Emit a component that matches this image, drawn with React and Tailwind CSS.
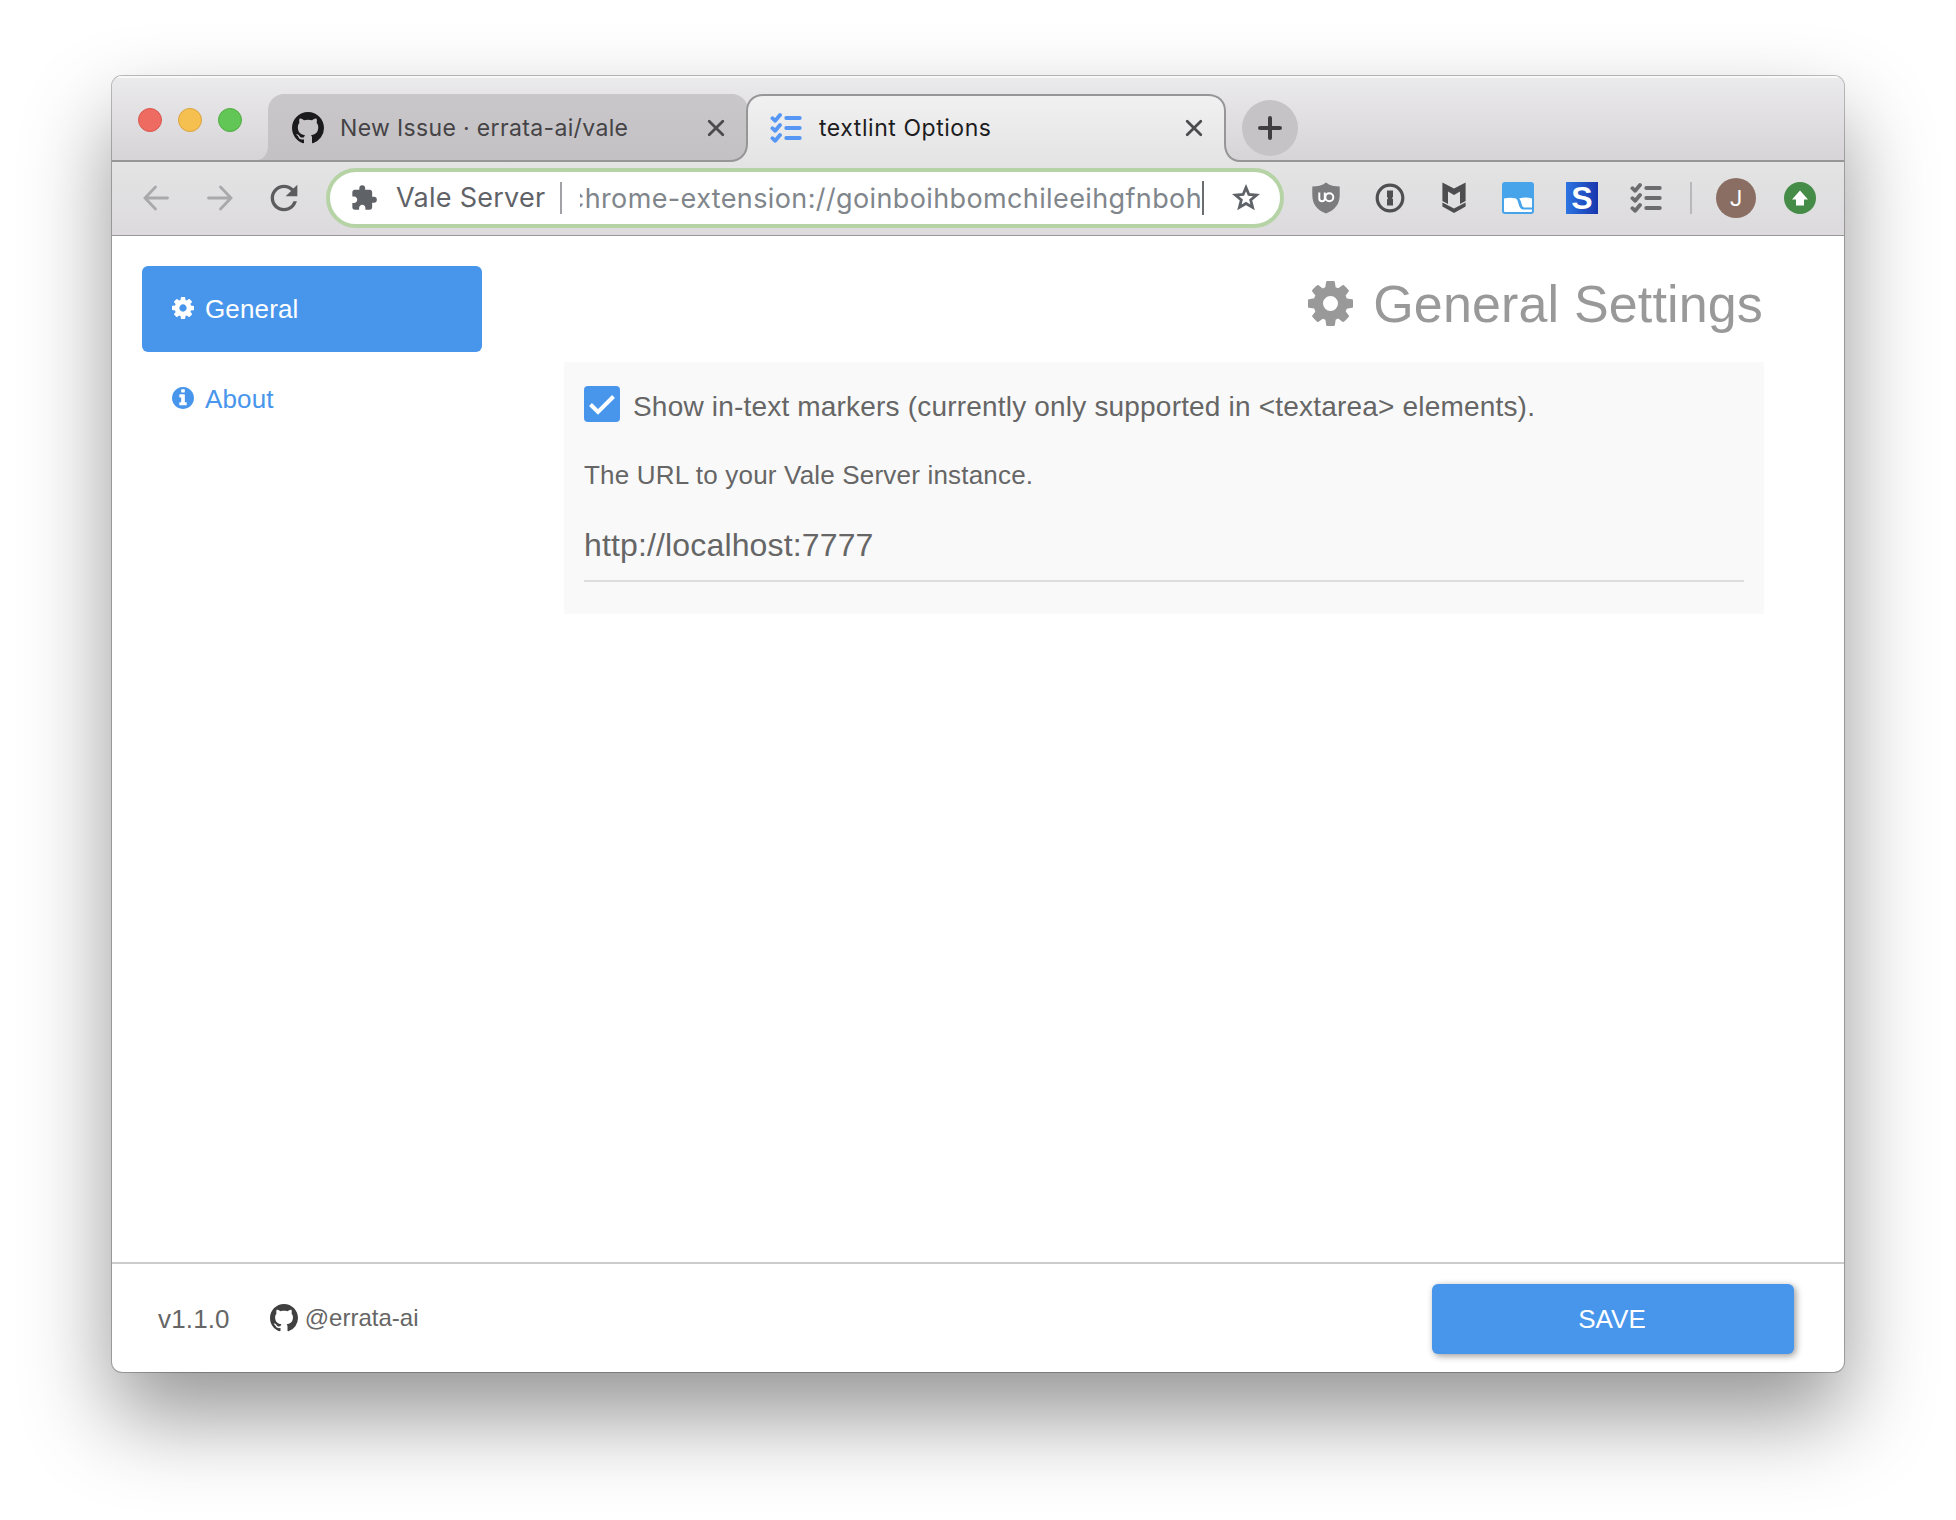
import { MdExtension, MdRefresh } from "react-icons/md";

const GEAR =
  "M1024 896q0-106-75-181t-181-75-181 75-75 181 75 181 181 75 181-75 75-181zm512-109v222q0 12-8 23t-20 13l-185 28q-19 54-39 91 35 50 107 138 10 12 10 25t-9 23q-27 37-99 108t-94 71q-12 0-26-9l-138-108q-44 23-91 38-16 136-29 186-7 28-36 28h-222q-14 0-24.500-8.500t-11.500-21.500l-28-184q-49-16-90-37l-141 107q-10 9-25 9-14 0-25-11-126-114-165-168-7-10-7-23 0-12 8-23 15-21 51-66.500t54-70.500q-27-50-41-99l-183-27q-13-2-21-12.500t-8-23.500v-222q0-12 8-23t19-13l186-28q14-46 39-92-40-57-107-138-10-12-10-24 0-10 9-23 26-36 98.500-107.500t94.500-71.500q13 0 26 10l138 107q44-23 91-38 16-136 29-186 7-28 36-28h222q14 0 24.500 8.500t11.500 21.500l28 184q49 16 90 37l142-107q9-9 24-9 13 0 25 10 129 119 165 170 7 8 7 22 0 12-8 23-15 21-51 66.500t-54 70.500q26 50 41 98l183 28q13 2 21 12.500t8 23.500z";

const INFO =
  "M1024 1376v-160q0-14-9-23t-23-9h-96v-512q0-14-9-23t-23-9h-320q-14 0-23 9t-9 23v160q0 14 9 23t23 9h96v320h-96q-14 0-23 9t-9 23v160q0 14 9 23t23 9h448q14 0 23-9t9-23zm-128-896v-160q0-14-9-23t-23-9h-192q-14 0-23 9t-9 23v160q0 14 9 23t23 9h192q14 0 23-9t9-23zm640 416q0 209-103 385.500t-279.500 279.500-385.500 103-385.500-103-279.500-279.500-103-385.500 103-385.500 279.500-279.500 385.500-103 385.500 103 279.500 279.500 103 385.500z";

function Glyph({ d, className }) {
  return (
    <svg viewBox="0 128 1536 1536" className={className} fill="currentColor">
      <path d={d} />
    </svg>
  );
}

function Octocat({ className }) {
  return (
    <svg viewBox="0 0 16 16" className={className} fill="currentColor">
      <path d="M8 0C3.580 0 0 3.580 0 8c0 3.540 2.290 6.530 5.470 7.590.4.070.55-.17.55-.38 0-.19-.01-.82-.01-1.490-2.010.37-2.530-.49-2.690-.94-.09-.23-.48-.94-.82-1.130-.28-.15-.68-.52-.01-.53.63-.01 1.080.58 1.230.82.72 1.210 1.870.87 2.330.66.07-.52.28-.87.51-1.070-1.780-.2-3.640-.89-3.640-3.950 0-.87.31-1.590.82-2.150-.08-.2-.36-1.020.08-2.120 0 0 .67-.21 2.200.82.64-.18 1.320-.27 2-.27s1.360.09 2 .27c1.530-1.040 2.200-.82 2.200-.82.44 1.100.16 1.920.08 2.120.51.56.82 1.270.82 2.150 0 3.070-1.870 3.750-3.650 3.950.29.25.54.73.54 1.480 0 1.070-.01 1.930-.01 2.200 0 .21.15.46.55.38A8.010 8.010 0 0 0 16 8c0-4.420-3.580-8-8-8z" />
    </svg>
  );
}

function Checklist({ className }) {
  return (
    <svg viewBox="0 0 32 32" className={className} fill="none" stroke="currentColor" strokeLinecap="round" strokeLinejoin="round">
      {[6, 16, 26].map((y) => (
        <g key={y}>
          <path strokeWidth="3.800" d={`M2.400 ${y + 0.2}l2.800 2.600L10 ${y - 3}`} />
          <path strokeWidth="3.800" d={`M16.200 ${y}H29.800`} />
        </g>
      ))}
    </svg>
  );
}

function Cross() {
  return (
    <svg viewBox="0 0 18 18" className="h-[18px] w-[18px] text-[#4c4b4d]" stroke="currentColor" strokeWidth="2.800" strokeLinecap="round">
      <path d="M2.200 2.200l13.600 13.600M15.800 2.200L2.200 15.800" />
    </svg>
  );
}

function InactiveTab() {
  return (
    <div className="relative flex h-[66px] w-[480px] items-center rounded-t-[16px] bg-gradient-to-b from-[#c9c7ca] to-[#c3c1c3] pl-6 pr-[23px] pt-[2px]">
      <svg viewBox="0 0 10 14" className="absolute -left-[10px] bottom-0 h-[14px] w-[10px]">
        <path d="M10 0V14H0C6 13 10 7 10 0Z" fill="#c4c2c4" />
      </svg>
      <Octocat className="h-8 w-8 text-[#1b1a1c]" />
      <span className="ml-4 whitespace-nowrap text-[23px] tracking-[0.35px] text-[#454346]">New Issue · errata-ai/vale</span>
      <span className="ml-auto"><Cross /></span>
    </div>
  );
}

function ActiveTab() {
  return (
    <div className="relative flex h-[66px] w-[478px] items-center pl-[21px] pr-[23px] pt-[2px]">
      <svg viewBox="0 0 510 68" className="absolute -left-[18px] top-0 h-[68px] w-[510px] max-w-none">
        <defs>
          <linearGradient id="tabFill" x1="0" y1="0" x2="0" y2="1">
            <stop offset="0" stopColor="#f2f1f2" />
            <stop offset="1" stopColor="#e4e4e4" />
          </linearGradient>
        </defs>
        <path d="M0 67C10 67 17 60 17 50V17C17 7 24 1 33 1H478C488 1 495 7 495 17V50C495 60 501 67 510 67V68H0Z" fill="url(#tabFill)" />
        <path d="M0 67C10 67 17 60 17 50V17C17 7 24 1 33 1H478C488 1 495 7 495 17V50C495 60 501 67 510 67" fill="none" stroke="#969697" strokeWidth="2" />
      </svg>
      <div className="relative flex w-full items-center">
        <Checklist className="ml-px h-8 w-8 text-[#5697f6]" />
        <span className="ml-[17px] whitespace-nowrap text-[23px] tracking-[0.550px] text-[#1d1c1e]">textlint Options</span>
        <span className="ml-auto"><Cross /></span>
      </div>
    </div>
  );
}

function TabStrip() {
  return (
    <div className="flex h-[86px] items-end border-b-2 border-[#969697] bg-gradient-to-b from-[#ebeaec] to-[#d6d4d7] shadow-[inset_0_2px_0_#f8f8f8]">
      <div className="flex w-[156px] gap-4 self-start pl-[26px] pt-8">
        <span className="h-6 w-6 rounded-full border border-[#d9574e] bg-[#ed6b60]" />
        <span className="h-6 w-6 rounded-full border border-[#dba340] bg-[#f5c04f]" />
        <span className="h-6 w-6 rounded-full border border-[#52ab44] bg-[#62c656]" />
      </div>
      <InactiveTab />
      <ActiveTab />
      <div className="mb-1 ml-4 flex h-14 w-14 items-center justify-center rounded-full bg-[#c5c3c6]">
        <svg viewBox="0 0 24 24" className="h-6 w-6" stroke="#3f3e40" strokeWidth="4" strokeLinecap="round">
          <path d="M12 2v20M2 12h20" />
        </svg>
      </div>
    </div>
  );
}

function Arrow({ className }) {
  return (
    <svg viewBox="0 0 26 26" className={className} fill="none" stroke="#a9a8aa" strokeWidth="2.800" strokeLinecap="round" strokeLinejoin="miter">
      <path d="M24.500 13H2.500M12.500 2L2 13l10.500 11" />
    </svg>
  );
}

function AddressBar() {
  return (
    <div className="ml-[22px] flex h-[60px] w-[958px] items-center rounded-full border-4 border-[#b5d3a5] bg-white">
      <MdExtension className="ml-[20px] h-7 w-7 text-[#5f6368]" />
      <span className="ml-[18px] w-[164px] whitespace-nowrap pt-px text-[27px] tracking-[0.270px] text-[#5f6368]">Vale Server</span>
      <span className="h-8 w-[2px] bg-[#a0a2a5]" />
      <div className="ml-[18px] flex w-[622px] justify-end overflow-hidden pt-px">
        <span className="whitespace-nowrap text-[27px] leading-[36px] tracking-[0.380px] text-[#80868b]">chrome-extension://goinboihbomchileeihgfnboh</span>
      </div>
      <span className="h-[34px] w-[2px] bg-[#6a6d70]" />
      <svg viewBox="0 0 30 28" className="ml-[27px] h-7 w-[30px]" fill="none" stroke="#5f6368" strokeWidth="2.800">
        <path d="M15 3.600l2.900 6.900 7.600.6-5.800 4.900 1.900 7.400L15 19.500l-6.600 3.900 1.900-7.400L4.500 11.100l7.600-.6z" />
      </svg>
    </div>
  );
}

function Extensions() {
  return (
    <div className="ml-[26px] flex items-center gap-8">
      <span className="flex w-8 justify-center">
        <svg viewBox="0 0 28 32" className="h-8 w-7">
          <path d="M14 0.500C10.500 3.500 5 4.500 0.300 4.500V13C0.300 22 5 28 14 31.500C23 28 27.700 22 27.700 13V4.500C23 4.500 17.500 3.500 14 0.500Z" fill="#7c7b7d" />
          <path d="M7.300 10.500V16.500Q7.300 19.300 10 19.300T12.800 16.500V10.500" fill="none" stroke="#fff" strokeWidth="2" />
          <circle cx="17.300" cy="15.300" r="4" fill="none" stroke="#fff" strokeWidth="2" />
        </svg>
      </span>
      <span className="flex w-8 justify-center">
        <svg viewBox="0 0 30 30" className="h-[30px] w-[30px]">
          <circle cx="15" cy="15" r="12.800" fill="none" stroke="#4f4e50" strokeWidth="3.200" />
          <path d="M12 7.500H18V14L16.800 15L18 16V22.500H12V16.500L13.200 15.300L12 14Z" fill="#4f4e50" />
        </svg>
      </span>
      <span className="flex w-8 justify-center">
        <svg viewBox="0 0 24 32" className="h-8 w-6" fill="#4d4c4e">
          <path d="M0.400 0.500L12 6.500L23.600 0.500V19L18 22V9.500L12 13L6 9.500V22L0.400 19Z" />
          <path d="M0.400 20.500L12 26.500L23.600 20.500V24.500L12 31L0.400 24.500Z" />
        </svg>
      </span>
      <svg viewBox="0 0 32 32" className="h-8 w-8">
        <rect width="32" height="32" rx="3" fill="#48a4ea" />
        <path d="M2 16.500Q8 15 14 16.500C17 18 16 27 21 27.500H30V29Q30 30 29 30H3Q2 30 2 29Z" fill="#fff" />
        <path d="M17 16.500Q24 14.500 30 16.500V25.500H22C19 25 20 19 17 16.500Z" fill="#fff" />
      </svg>
      <span className="flex h-8 w-8 items-center justify-center bg-gradient-to-r from-[#2d74e2] to-[#1a35ad] font-['Liberation_Sans'] text-[32px] font-bold leading-8 text-white">S</span>
      <Checklist className="h-8 w-8 text-[#6c6b6d]" />
    </div>
  );
}

function Toolbar() {
  return (
    <div className="flex h-[74px] items-center border-b border-[#98979a] bg-gradient-to-b from-[#e4e4e4] to-[#dcdadd] pb-px pl-[31px]">
      <Arrow className="h-[26px] w-[26px]" />
      <Arrow className="ml-[38px] h-[26px] w-[26px] rotate-180" />
      <MdRefresh className="ml-[31px] h-10 w-10 text-[#5c5b5d]" />
      <AddressBar />
      <Extensions />
      <span className="ml-7 h-8 w-[2px] bg-[#b8b7b9]" />
      <span className="ml-6 flex h-10 w-10 items-center justify-center rounded-full bg-[#8a6e64] font-[Roboto] text-[22px] text-white">J</span>
      <span className="ml-7 flex h-8 w-8 items-center justify-center rounded-full bg-[#448c48]">
        <svg viewBox="0 0 16 16" className="h-4 w-4" fill="#fff">
          <path d="M8 0.500L16 9.500H12V15.500H4V9.500H0Z" />
        </svg>
      </span>
    </div>
  );
}

function Sidebar() {
  return (
    <nav className="flex w-[340px] flex-col gap-1 text-[26px] leading-[30px] tracking-[0.150px]">
      <a className="flex h-[86px] items-center rounded-md bg-[#4896ec] pl-[30px] text-white">
        <Glyph d={GEAR} className="mb-[2px] h-[22px] w-[22px]" />
        <span className="ml-[11px]">General</span>
      </a>
      <a className="flex h-[86px] items-center pl-[30px] text-[#4896ec]">
        <Glyph d={INFO} className="mb-[2px] h-[22px] w-[22px]" />
        <span className="ml-[11px]">About</span>
      </a>
    </nav>
  );
}

function Settings() {
  return (
    <section className="w-[1200px] text-[#666]">
      <h1 className="flex h-[96px] items-center justify-end pb-[20px] pr-px text-[52px] leading-[60px] tracking-[0.150px] text-[#999]">
        <Glyph d={GEAR} className="mb-[2px] mr-[20px] h-[45px] w-[45px]" />
        General Settings
      </h1>
      <div className="h-[252px] bg-[#f9f9f9] px-5 pt-6">
        <label className="flex h-9 items-center">
          <span className="flex h-9 w-9 items-center justify-center rounded bg-[#4896ec]">
            <svg viewBox="0 0 36 36" className="h-9 w-9" fill="none" stroke="#fff" strokeWidth="4">
              <path d="M6.500 18.500L14 26L29.500 10.500" />
            </svg>
          </span>
          <span className="ml-[13px] whitespace-nowrap pt-[5px] text-[28px] leading-[30px] tracking-[0.190px]">Show in-text markers (currently only supported in &lt;textarea&gt; elements).</span>
        </label>
        <p className="mt-[38px] text-[26px] leading-[30px] tracking-[0.190px]">The URL to your Vale Server instance.</p>
        <div className="mt-[31px] h-[61px] border-b-2 border-[#ddd] text-[32px] leading-[48px] tracking-[0.150px]">http://localhost:7777</div>
      </div>
    </section>
  );
}

function Footer() {
  return (
    <footer className="flex h-[110px] items-center border-t-2 border-[#ccc] pl-[46px] pr-[50px] text-[#666]">
      <span className="pt-[2px] text-[26px] tracking-[0.150px]">v1.1.0</span>
      <Octocat className="ml-[40px] h-7 w-7 text-[#404040]" />
      <span className="ml-[7px] text-2xl">@errata-ai</span>
      <button className="ml-auto mt-[2px] h-[70px] w-[362px] rounded-md bg-[#4896ec] pr-[2px] text-[26px] text-white shadow-[2px_2px_7px_rgba(0,0,0,0.4)]">SAVE</button>
    </footer>
  );
}

export default function App() {
  return (
    <div className="h-[1520px] w-[1956px] overflow-hidden bg-white pl-[112px] pt-[76px] font-['Liberation_Sans',sans-serif]">
      <div className="flex h-[1296px] w-[1732px] flex-col overflow-hidden rounded-[10px] bg-white shadow-[0_0_0_1px_rgba(0,0,0,0.25),0_44px_88px_rgba(0,0,0,0.42)]">
        <div className="font-[Inter,sans-serif]">
          <TabStrip />
          <Toolbar />
        </div>
        <main className="flex flex-1 gap-[82px] pl-[30px] pt-[30px]">
          <Sidebar />
          <Settings />
        </main>
        <Footer />
      </div>
    </div>
  );
}
